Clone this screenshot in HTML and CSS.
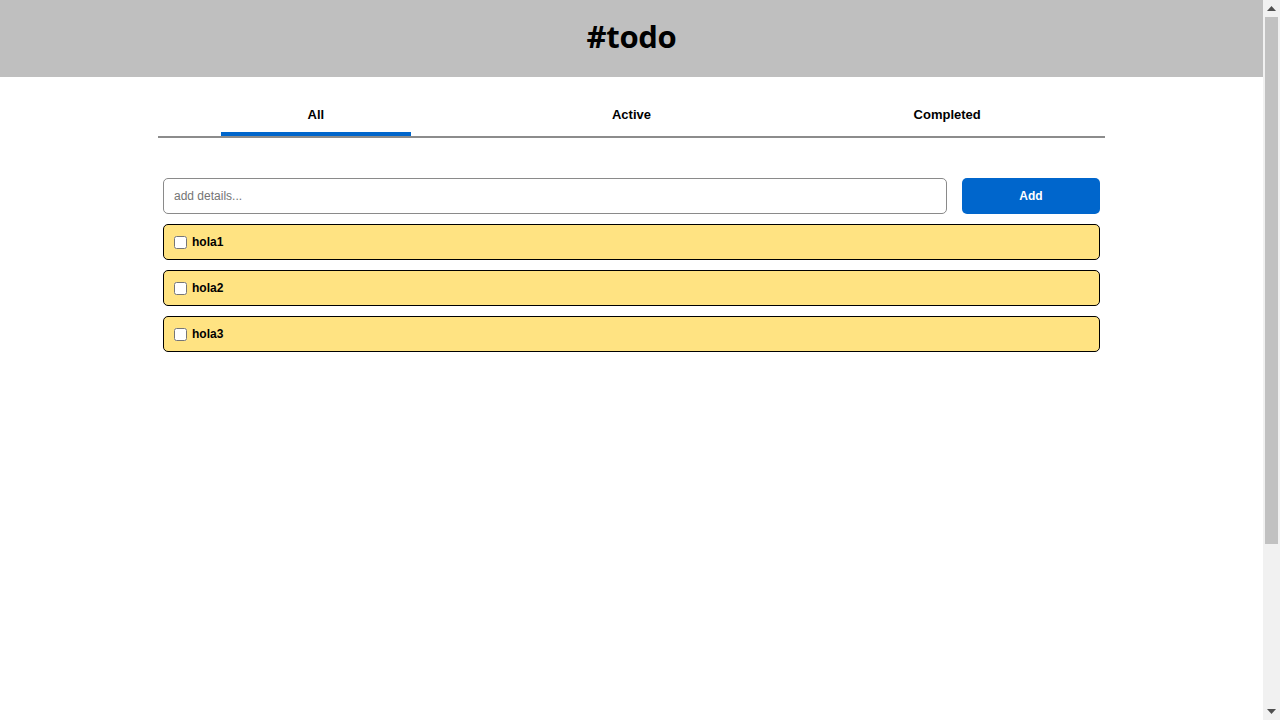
FILE: index.html
```html
<!DOCTYPE html>
<html lang="en">
<head>
<meta charset="utf-8">
<title>#todo</title>
<link rel="stylesheet" href="styles.css">
</head>
<body>
<div class="page">
  <header class="header">
    <h1 class="title">#todo</h1>
  </header>
  <main class="main">
    <nav class="tabs">
      <button class="tab tab-active">All</button>
      <button class="tab">Active</button>
      <button class="tab">Completed</button>
    </nav>
    <section class="content">
      <form class="add-form">
        <input class="add-input" type="text" placeholder="add details...">
        <button class="add-btn" type="button">Add</button>
      </form>
      <ul class="list">
        <li class="item"><input class="check" type="checkbox"><span class="label">hola1</span></li>
        <li class="item"><input class="check" type="checkbox"><span class="label">hola2</span></li>
        <li class="item"><input class="check" type="checkbox"><span class="label">hola3</span></li>
      </ul>
    </section>
  </main>
</div>
<div class="scrollbar" aria-hidden="true">
  <div class="sb-btn">
    <svg width="9" height="5" viewBox="0 0 9 5"><path d="M4.5 0 L9 5 L0 5 Z" fill="#505050"/></svg>
  </div>
  <div class="sb-track"><div class="sb-thumb"></div></div>
  <div class="sb-btn">
    <svg width="9" height="5" viewBox="0 0 9 5"><path d="M0 0 L9 0 L4.5 5 Z" fill="#505050"/></svg>
  </div>
</div>
</body>
</html>
```
FILE: styles.css
```css
html, body {
  margin: 0;
  padding: 0;
}
body {
  font-family: "Liberation Sans", Arial, sans-serif;
  color: #000;
  background: #fff;
  display: flex;
  height: 100vh;
  overflow: hidden;
}
.page {
  flex: 1;
  min-width: 0;
}
.scrollbar {
  width: 17px;
  background: #f1f1f1;
  display: flex;
  flex-direction: column;
}
.sb-btn {
  height: 17px;
  display: flex;
  align-items: center;
  justify-content: center;
}
.sb-track {
  flex: 1;
  padding: 0 2px;
}
.sb-thumb {
  height: 527px;
  background: #c1c1c1;
}
.header {
  background: #bfbfbf;
  height: 77px;
  display: flex;
  align-items: center;
  justify-content: center;
}
.title {
  margin: 0 0 6px;
  font-family: "Open Sans", "Noto Sans", sans-serif;
  font-weight: 700;
  font-size: 31px;
  letter-spacing: -0.3px;
}
.main {
  width: 947px;
  margin: 0 auto;
}
.tabs {
  margin-top: 15px;
  display: grid;
  grid-template-columns: repeat(3, 1fr);
  border-bottom: 2px solid #8c8c8c;
}
.tab {
  position: relative;
  height: 44px;
  border: 0;
  background: transparent;
  font-family: "Liberation Sans", Arial, sans-serif;
  font-weight: 700;
  font-size: 13px;
  color: #000;
  padding: 0;
}
.tab-active::after {
  content: "";
  position: absolute;
  left: 20%;
  right: 20%;
  bottom: 0;
  height: 4px;
  background: #0066cc;
}
.content {
  padding: 40px 5px 0;
}
.add-form {
  display: flex;
  gap: 15px;
  margin: 0;
}
.add-input {
  flex: 1;
  height: 36px;
  box-sizing: border-box;
  border: 1px solid #8a8a8a;
  border-radius: 5px;
  padding: 0 10px;
  font-family: "Liberation Sans", Arial, sans-serif;
  font-size: 12px;
  outline: none;
}
.add-input::placeholder {
  color: #757575;
}
.add-btn {
  width: 138px;
  height: 36px;
  border: 0;
  border-radius: 5px;
  background: #0066cc;
  color: #fff;
  font-family: "Liberation Sans", Arial, sans-serif;
  font-weight: 700;
  font-size: 12px;
}
.list {
  list-style: none;
  margin: 10px 0 0;
  padding: 0;
  display: flex;
  flex-direction: column;
  gap: 10px;
}
.item {
  height: 36px;
  box-sizing: border-box;
  background: #ffe382;
  border: 1px solid #000;
  border-radius: 5px;
  display: flex;
  align-items: center;
  padding: 0 6px;
}
.check {
  margin: 0 5px 0 4px;
  width: 13px;
  height: 13px;
}
.label {
  font-weight: 700;
  font-size: 12px;
}
```
